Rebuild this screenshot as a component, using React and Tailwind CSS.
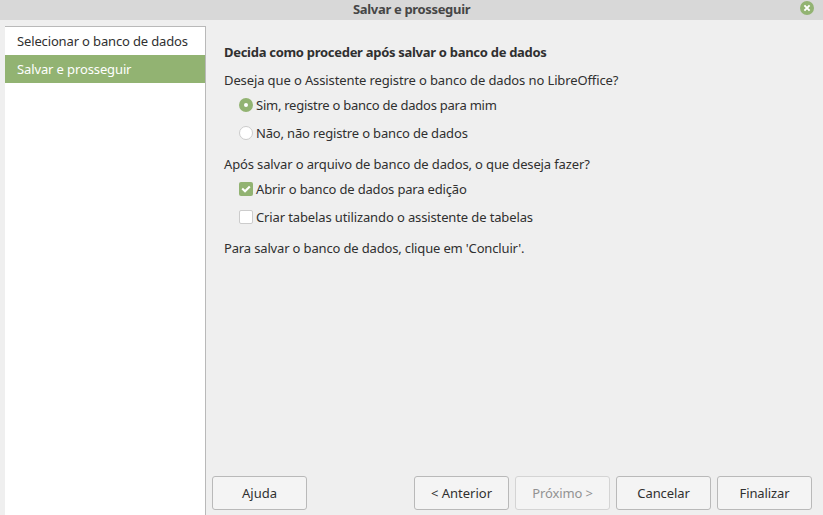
const steps = [
  { label: 'Selecionar o banco de dados', style: 'bg-white text-[#303030] tracking-[-0.145px]' },
  { label: 'Salvar e prosseguir', style: 'bg-[#92b372] text-white tracking-[-0.12px]' },
];

function Line({ children, className = '' }) {
  return <p className={`h-5 leading-5 whitespace-nowrap ${className}`}>{children}</p>;
}

function Radio({ checked }) {
  return checked ? (
    <span className="flex size-3.5 shrink-0 items-center justify-center rounded-full bg-[#92b372]">
      <span className="size-1 rounded-full bg-white" />
    </span>
  ) : (
    <span className="size-3.5 shrink-0 rounded-full border border-[#cccccc] bg-white" />
  );
}

function Checkbox({ checked }) {
  return checked ? (
    <span className="flex size-3.5 shrink-0 items-center justify-center rounded-xs bg-[#92b372]">
      <svg viewBox="0 0 14 14" className="size-3.5" fill="none" stroke="white" strokeWidth="2.1">
        <path d="M3.2 6.6 L6 9.2 L10.8 4.4" />
      </svg>
    </span>
  ) : (
    <span className="size-3.5 shrink-0 rounded-xs border border-[#cccccc] bg-white" />
  );
}

function Option({ control, label, className = '' }) {
  return (
    <label className={`ml-[15px] flex h-5 items-center gap-[3px] whitespace-nowrap ${className}`}>
      {control}
      <span className="pt-0.5">{label}</span>
    </label>
  );
}

function Button({ children, disabled, className = '' }) {
  return (
    <button
      disabled={disabled}
      className={`h-[34px] w-[95px] rounded-[3px] border bg-[#f4f4f4] pt-px whitespace-nowrap ${
        disabled ? 'border-[#d4d4d4] text-[#929292]' : 'border-[#b9b9b9]'
      } ${className}`}
    >
      {children}
    </button>
  );
}

export default function App() {
  return (
    <div className="flex h-[515px] w-[823px] flex-col overflow-hidden bg-[#efefef] font-['Noto_Sans',sans-serif] text-[13px] text-[#303030]">
      <header className="flex h-5 shrink-0 bg-[#d8d8d8]">
        <h1 className="flex-1 pl-[353px] leading-[18px] font-bold tracking-[-0.33px] whitespace-nowrap text-[#464646]">
          Salvar e prosseguir
        </h1>
        <button aria-label="Fechar" className="mt-px mr-[9px] size-3.5">
          <svg viewBox="0 0 14 14" className="size-3.5">
            <circle cx="7" cy="7" r="7" fill="#92b372" />
            <path d="M4.4 4.4 L9.6 9.6 M9.6 4.4 L4.4 9.6" stroke="white" strokeWidth="1.9" />
          </svg>
        </button>
      </header>
      <div className="flex min-h-0 flex-1 pt-1.5 pl-[5px]">
        <nav className="w-[201px] shrink-0 border-t border-r border-[#b9b9b9] bg-white">
          {steps.map((s) => (
            <div key={s.label} className={`h-7 pl-3 leading-7 whitespace-nowrap ${s.style}`}>
              {s.label}
            </div>
          ))}
        </nav>
        <main className="flex flex-1 flex-col">
          <section className="flex-1 pt-4 pl-[18px]">
            <Line className="font-bold tracking-[-0.29px]">Decida como proceder após salvar o banco de dados</Line>
            <Line className="mt-2 tracking-[-0.115px]">Deseja que o Assistente registre o banco de dados no LibreOffice?</Line>
            <Option
              className="mt-[5px] tracking-[-0.25px]"
              control={<Radio checked />}
              label="Sim, registre o banco de dados para mim"
            />
            <Option
              className="mt-2 tracking-[-0.16px]"
              control={<Radio />}
              label="Não, não registre o banco de dados"
            />
            <Line className="mt-[11px] tracking-[-0.135px]">Após salvar o arquivo de banco de dados, o que deseja fazer?</Line>
            <Option
              className="mt-[5px] tracking-[-0.17px]"
              control={<Checkbox checked />}
              label="Abrir o banco de dados para edição"
            />
            <Option
              className="mt-2 tracking-[-0.125px]"
              control={<Checkbox />}
              label="Criar tabelas utilizando o assistente de tabelas"
            />
            <Line className="mt-[11px] tracking-[-0.155px]">Para salvar o banco de dados, clique em 'Concluir'.</Line>
          </section>
          <footer className="flex gap-1.5 pr-[11px] pb-[5px] pl-1.5">
            <Button className="mr-auto">Ajuda</Button>
            <Button>&lt; Anterior</Button>
            <Button disabled className="tracking-[-0.1px]">Próximo &gt;</Button>
            <Button className="tracking-[-0.1px]">Cancelar</Button>
            <Button className="tracking-[-0.1px]">Finalizar</Button>
          </footer>
        </main>
      </div>
    </div>
  );
}
